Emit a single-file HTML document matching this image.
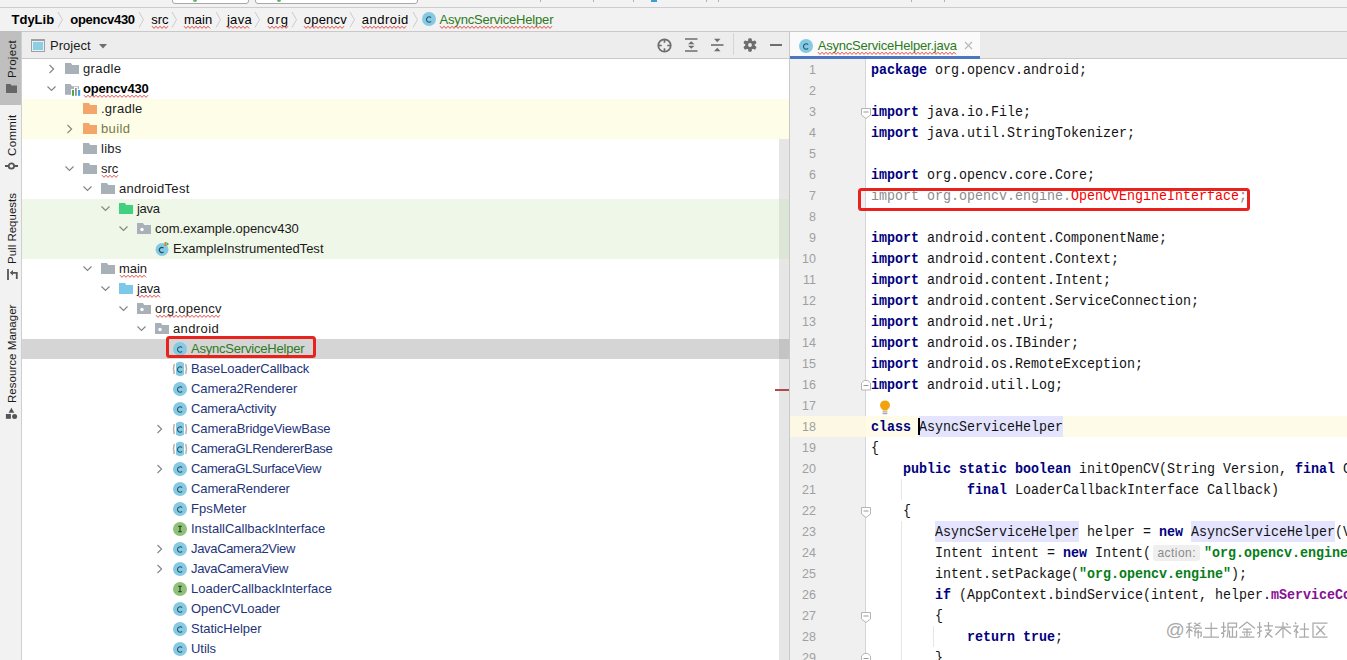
<!DOCTYPE html><html><head><meta charset="utf-8"><style>
*{margin:0;padding:0;box-sizing:border-box}
html,body{width:1347px;height:660px;overflow:hidden;background:#f2f2f2;font-family:"Liberation Sans",sans-serif;position:relative}
.a{position:absolute}
.t{position:absolute;white-space:nowrap}
.code{position:absolute;left:871px;font-family:"Liberation Mono",monospace;font-size:13.333px;line-height:21px;height:21px;white-space:pre;color:#121212;transform:scaleY(1.1);transform-origin:0 14px}
.ln{position:absolute;left:790px;width:26px;text-align:right;font-family:"Liberation Sans",sans-serif;font-size:12.5px;line-height:21px;color:#a0a0a0}
.k{color:#000080;font-weight:bold}
.s{color:#067d17;font-weight:bold}
.f{color:#871094;font-weight:bold}
.hl{background:#e4e4ff}
svg{position:absolute;overflow:visible}
</style></head><body>
<div class="a" style="left:0;top:0;width:1347px;height:8px;background:#f2f2f2;border-bottom:1px solid #cdcdcd"></div>
<div class="a" style="left:172px;top:-4px;width:77px;height:8px;border:1px solid #a9a9a9;border-radius:3px;background:#ffffff"></div>
<div class="a" style="left:255px;top:-4px;width:163px;height:8px;border:1px solid #a9a9a9;border-radius:3px;background:#ffffff"></div>
<div class="a" style="left:192.5px;top:-2.5px;width:4px;height:4px;border-radius:2px;background:#5fb55f"></div>
<div class="a" style="left:276.5px;top:-2.5px;width:4px;height:4px;border-radius:2px;background:#5fb55f"></div>
<div class="a" style="left:540px;top:0;width:1px;height:2px;background:#b0b0b0"></div>
<div class="a" style="left:593px;top:0;width:1px;height:2px;background:#b0b0b0"></div>
<div class="a" style="left:633px;top:0;width:1px;height:2px;background:#b0b0b0"></div>
<div class="a" style="left:706px;top:0;width:1px;height:2px;background:#b0b0b0"></div>
<div class="a" style="left:718px;top:0;width:1px;height:2px;background:#b0b0b0"></div>
<div class="a" style="left:911px;top:0;width:1px;height:2px;background:#b0b0b0"></div>
<div class="a" style="left:944px;top:0;width:1px;height:2px;background:#b0b0b0"></div>
<div class="a" style="left:651px;top:0;width:6px;height:1.5px;background:#3d9fd0"></div>
<div class="a" style="left:0;top:8px;width:1347px;height:24px;background:#f2f2f2;border-bottom:1px solid #c9c9c9"></div>
<div class="t" style="left:11.50px;top:10px;font-size:13px;line-height:20px;height:20px;font-weight:bold;color:#000;letter-spacing:-0.001px;">TdyLib</div>
<svg style="left:57.5px;top:12.2px" width="4.5" height="15.4"><polyline points="0,0 4.5,7.7 0,15.4" fill="none" stroke="#cccccc" stroke-width="1"/></svg>
<div class="t" style="left:70.30px;top:10px;font-size:13px;line-height:20px;height:20px;font-weight:bold;color:#000;letter-spacing:-0.300px;">opencv430</div>
<svg style="left:139px;top:12.2px" width="4.5" height="15.4"><polyline points="0,0 4.5,7.7 0,15.4" fill="none" stroke="#cccccc" stroke-width="1"/></svg>
<div class="t" style="left:151.20px;top:10px;font-size:13px;line-height:20px;height:20px;color:#000;letter-spacing:-0.015px;">src</div>
<svg style="left:151.7px;top:26px" width="16.30000000000001" height="3"><polyline points="0.0,0.2 2.0,2.4 4.0,0.2 6.0,2.4 8.0,0.2 10.0,2.4 12.0,0.2 14.0,2.4 16.0,0.2" fill="none" stroke="#e23b35" stroke-width="0.9"/></svg>
<svg style="left:172px;top:12.2px" width="4.5" height="15.4"><polyline points="0,0 4.5,7.7 0,15.4" fill="none" stroke="#cccccc" stroke-width="1"/></svg>
<div class="t" style="left:183.90px;top:10px;font-size:13px;line-height:20px;height:20px;color:#000;letter-spacing:0.074px;">main</div>
<svg style="left:184.4px;top:26px" width="27.400000000000006" height="3"><polyline points="0.0,0.2 2.0,2.4 4.0,0.2 6.0,2.4 8.0,0.2 10.0,2.4 12.0,0.2 14.0,2.4 16.0,0.2 18.0,2.4 20.0,0.2 22.0,2.4 24.0,0.2 26.0,2.4" fill="none" stroke="#e23b35" stroke-width="0.9"/></svg>
<svg style="left:215.5px;top:12.2px" width="4.5" height="15.4"><polyline points="0,0 4.5,7.7 0,15.4" fill="none" stroke="#cccccc" stroke-width="1"/></svg>
<div class="t" style="left:226.90px;top:10px;font-size:13px;line-height:20px;height:20px;color:#000;letter-spacing:0.317px;">java</div>
<svg style="left:227.4px;top:26px" width="23.799999999999983" height="3"><polyline points="0.0,0.2 2.0,2.4 4.0,0.2 6.0,2.4 8.0,0.2 10.0,2.4 12.0,0.2 14.0,2.4 16.0,0.2 18.0,2.4 20.0,0.2 22.0,2.4" fill="none" stroke="#e23b35" stroke-width="0.9"/></svg>
<svg style="left:255px;top:12.2px" width="4.5" height="15.4"><polyline points="0,0 4.5,7.7 0,15.4" fill="none" stroke="#cccccc" stroke-width="1"/></svg>
<div class="t" style="left:267.00px;top:10px;font-size:13px;line-height:20px;height:20px;color:#000;letter-spacing:1.155px;">org</div>
<svg style="left:267.5px;top:26px" width="20.100000000000023" height="3"><polyline points="0.0,0.2 2.0,2.4 4.0,0.2 6.0,2.4 8.0,0.2 10.0,2.4 12.0,0.2 14.0,2.4 16.0,0.2 18.0,2.4 20.0,0.2" fill="none" stroke="#e23b35" stroke-width="0.9"/></svg>
<svg style="left:291.5px;top:12.2px" width="4.5" height="15.4"><polyline points="0,0 4.5,7.7 0,15.4" fill="none" stroke="#cccccc" stroke-width="1"/></svg>
<div class="t" style="left:303.80px;top:10px;font-size:13px;line-height:20px;height:20px;color:#000;letter-spacing:0.196px;">opencv</div>
<svg style="left:304.3px;top:26px" width="41.89999999999998" height="3"><polyline points="0.0,0.2 2.0,2.4 4.0,0.2 6.0,2.4 8.0,0.2 10.0,2.4 12.0,0.2 14.0,2.4 16.0,0.2 18.0,2.4 20.0,0.2 22.0,2.4 24.0,0.2 26.0,2.4 28.0,0.2 30.0,2.4 32.0,0.2 34.0,2.4 36.0,0.2 38.0,2.4 40.0,0.2" fill="none" stroke="#e23b35" stroke-width="0.9"/></svg>
<svg style="left:350px;top:12.2px" width="4.5" height="15.4"><polyline points="0,0 4.5,7.7 0,15.4" fill="none" stroke="#cccccc" stroke-width="1"/></svg>
<div class="t" style="left:361.70px;top:10px;font-size:13px;line-height:20px;height:20px;color:#000;letter-spacing:0.539px;">android</div>
<svg style="left:362.2px;top:26px" width="45.60000000000002" height="3"><polyline points="0.0,0.2 2.0,2.4 4.0,0.2 6.0,2.4 8.0,0.2 10.0,2.4 12.0,0.2 14.0,2.4 16.0,0.2 18.0,2.4 20.0,0.2 22.0,2.4 24.0,0.2 26.0,2.4 28.0,0.2 30.0,2.4 32.0,0.2 34.0,2.4 36.0,0.2 38.0,2.4 40.0,0.2 42.0,2.4 44.0,0.2" fill="none" stroke="#e23b35" stroke-width="0.9"/></svg>
<svg style="left:412.5px;top:12.2px" width="4.5" height="15.4"><polyline points="0,0 4.5,7.7 0,15.4" fill="none" stroke="#cccccc" stroke-width="1"/></svg>
<svg style="left:422px;top:12px" width="14" height="14" viewBox="0 0 14 14"><circle cx="7" cy="7" r="7" fill="#86c9e3"/><path d="M9.1 5.6 A2.7 2.7 0 1 0 9.1 9.4" fill="none" stroke="#24566b" stroke-width="1.05"/></svg>
<div class="t" style="left:439.50px;top:10px;font-size:13px;line-height:20px;height:20px;color:#2c7a1a;letter-spacing:-0.179px;">AsyncServiceHelper</div>
<svg style="left:440px;top:26px" width="113" height="3"><polyline points="0.0,0.2 2.0,2.4 4.0,0.2 6.0,2.4 8.0,0.2 10.0,2.4 12.0,0.2 14.0,2.4 16.0,0.2 18.0,2.4 20.0,0.2 22.0,2.4 24.0,0.2 26.0,2.4 28.0,0.2 30.0,2.4 32.0,0.2 34.0,2.4 36.0,0.2 38.0,2.4 40.0,0.2 42.0,2.4 44.0,0.2 46.0,2.4 48.0,0.2 50.0,2.4 52.0,0.2 54.0,2.4 56.0,0.2 58.0,2.4 60.0,0.2 62.0,2.4 64.0,0.2 66.0,2.4 68.0,0.2 70.0,2.4 72.0,0.2 74.0,2.4 76.0,0.2 78.0,2.4 80.0,0.2 82.0,2.4 84.0,0.2 86.0,2.4 88.0,0.2 90.0,2.4 92.0,0.2 94.0,2.4 96.0,0.2 98.0,2.4 100.0,0.2 102.0,2.4 104.0,0.2 106.0,2.4 108.0,0.2 110.0,2.4 112.0,0.2" fill="none" stroke="#e23b35" stroke-width="0.9"/></svg>
<div class="a" style="left:0;top:32px;width:22px;height:628px;background:#f2f2f2;border-right:1px solid #cfcfcf"></div>
<div class="a" style="left:0;top:31px;width:21px;height:74px;background:#bfbfbf"></div>
<div class="a" style="left:4.7px;top:77.60px;transform-origin:0 0;transform:rotate(-90deg);font-size:11.5px;line-height:14px;white-space:nowrap;color:#1a1a1a;letter-spacing:0.318px">Project</div>
<div class="a" style="left:4.7px;top:155.50px;transform-origin:0 0;transform:rotate(-90deg);font-size:11.5px;line-height:14px;white-space:nowrap;color:#1a1a1a;letter-spacing:0.338px">Commit</div>
<div class="a" style="left:4.7px;top:263.80px;transform-origin:0 0;transform:rotate(-90deg);font-size:11.5px;line-height:14px;white-space:nowrap;color:#1a1a1a;letter-spacing:0.004px">Pull Requests</div>
<div class="a" style="left:4.7px;top:402.70px;transform-origin:0 0;transform:rotate(-90deg);font-size:11.5px;line-height:14px;white-space:nowrap;color:#1a1a1a;letter-spacing:0.040px">Resource Manager</div>
<svg style="left:6px;top:84px" width="11" height="9"><path d="M0 0 H4.5 L5.5 1.5 H11 V9 H0 Z" fill="#666"/></svg>
<svg style="left:4px;top:161px" width="14" height="10"><circle cx="7.4" cy="5" r="2.7" fill="none" stroke="#555" stroke-width="1.8"/><path d="M1 5 H4.5 M10.3 5 H14" stroke="#555" stroke-width="1.8"/></svg>
<svg style="left:6px;top:268px" width="12" height="13"><path d="M2 1 V12" stroke="#555" stroke-width="1.8"/><path d="M5 4.8 H10.8 V11" fill="none" stroke="#555" stroke-width="1.8"/><path d="M3.8 4.8 L7 2 V7.6 Z" fill="#555"/></svg>
<svg style="left:5px;top:407px" width="12" height="12"><path d="M6.4 0.8 L9.3 5.8 H3.6 Z" fill="#555"/><rect x="0.9" y="7" width="5" height="4.8" fill="#555"/><circle cx="9.6" cy="9.4" r="2.5" fill="#555"/></svg>
<div class="a" style="left:22px;top:32px;width:767px;height:27px;background:#ededed;border-bottom:1px solid #c9c9c9"></div>
<svg style="left:31px;top:39px" width="14" height="13"><rect x="0.5" y="0.5" width="13" height="12" fill="#e2f2f7" stroke="#a0a0a0"/><rect x="0" y="0" width="14" height="2" fill="#a0a0a0"/><rect x="2" y="3" width="10" height="8" fill="#8fcde3"/></svg>
<div class="t" style="left:50.00px;top:36px;font-size:13px;line-height:20px;height:20px;color:#1a1a1a;letter-spacing:0.007px;">Project</div>
<svg style="left:99px;top:44px" width="8" height="5"><path d="M0 0 H8 L4 4.5 Z" fill="#6e6e6e"/></svg>
<svg style="left:657px;top:38px" width="15" height="15"><circle cx="7.5" cy="7.5" r="6.2" fill="none" stroke="#6e6e6e" stroke-width="1.8"/><path d="M7.5 1.5 V4.8 M7.5 10.2 V13.5 M1.5 7.5 H4.8 M10.2 7.5 H13.5" stroke="#6e6e6e" stroke-width="1.7"/></svg>
<svg style="left:685px;top:38px" width="13" height="14"><path d="M0 1 H12.5 M0 13 H12.5" stroke="#6e6e6e" stroke-width="1.6"/><path d="M3 6.3 L6.25 3.3 L9.5 6.3 Z M3 7.8 L6.25 10.8 L9.5 7.8 Z" fill="#6e6e6e"/></svg>
<svg style="left:711px;top:38px" width="13" height="14"><path d="M0 7 H12.5" stroke="#6e6e6e" stroke-width="1.6"/><path d="M3 0.8 L6.25 4.3 L9.5 0.8 Z M3 13.2 L6.25 9.7 L9.5 13.2 Z" fill="#6e6e6e"/></svg>
<div class="a" style="left:733px;top:33px;width:1px;height:22px;background:#d6d6d6"></div>
<svg style="left:743px;top:38px" width="14" height="14" viewBox="0 0 14 14"><g fill="#6e6e6e"><circle cx="7" cy="7" r="4.7"/><rect x="5.2" y="0.2" width="3.6" height="4" rx="1.2" transform="rotate(0 7 7)"/><rect x="5.2" y="0.2" width="3.6" height="4" rx="1.2" transform="rotate(60 7 7)"/><rect x="5.2" y="0.2" width="3.6" height="4" rx="1.2" transform="rotate(120 7 7)"/><rect x="5.2" y="0.2" width="3.6" height="4" rx="1.2" transform="rotate(180 7 7)"/><rect x="5.2" y="0.2" width="3.6" height="4" rx="1.2" transform="rotate(240 7 7)"/><rect x="5.2" y="0.2" width="3.6" height="4" rx="1.2" transform="rotate(300 7 7)"/></g><circle cx="7" cy="7" r="1.9" fill="#ededed"/></svg>
<div class="a" style="left:770px;top:44px;width:12px;height:2px;background:#6e6e6e"></div>
<div class="a" style="left:22px;top:59px;width:767px;height:601px;background:#ffffff"></div>
<div class="a" style="left:22px;top:99px;width:767px;height:40px;background:#fdfde8"></div>
<div class="a" style="left:22px;top:199px;width:757px;height:60px;background:#eff7e8"></div>
<div class="a" style="left:22px;top:339px;width:757px;height:20px;background:#d5d5d5"></div>
<div class="a" style="left:779px;top:139px;width:10px;height:521px;background:#e6e6e6"></div>
<div class="a" style="left:779px;top:199px;width:10px;height:60px;background:#dde5d6"></div>
<div class="a" style="left:779px;top:339px;width:10px;height:20px;background:#c4c4c4"></div>
<div class="a" style="left:775px;top:389px;width:14px;height:1.5px;background:#b04850"></div>
<svg style="left:49px;top:64.5px" width="6" height="9"><polyline points="0.5,0 4.6,4 0.5,8" fill="none" stroke="#858585" stroke-width="1.15"/></svg>
<svg style="left:65px;top:63px" width="14" height="11" viewBox="0 0 14 11"><path d="M0 0 H6 L7.2 2 H14 V11 H0 Z" fill="#a8b1b8"/></svg>
<div class="t" style="left:83.00px;top:59px;font-size:13px;line-height:20px;height:20px;color:#1a1a1a;letter-spacing:0.393px;">gradle</div>
<svg style="left:47px;top:86px" width="9" height="6"><polyline points="0.5,0.5 4.5,4.5 8.5,0.5" fill="none" stroke="#858585" stroke-width="1.15"/></svg>
<svg style="left:65px;top:84px" width="16" height="12" viewBox="0 0 16 12"><path d="M0 0 H5.5 L7 2.2 H14 V10.7 H0 Z" fill="#a8b1b8"/><rect x="6" y="5" width="10" height="7" fill="#fff"/><rect x="9" y="2.9" width="3.8" height="9" fill="#fff"/><rect x="7" y="6" width="2" height="5.8" fill="#4fa843"/><rect x="10" y="3.9" width="1.8" height="7.9" fill="#8d9499"/><rect x="13" y="6" width="2.2" height="5.8" fill="#3d9ee0"/></svg>
<div class="t" style="left:83.00px;top:79px;font-size:13px;line-height:20px;height:20px;font-weight:bold;color:#000;letter-spacing:-0.188px;">opencv430</div>
<svg style="left:83.5px;top:94.9px" width="64.69999999999999" height="3"><polyline points="0.0,0.2 2.0,2.4 4.0,0.2 6.0,2.4 8.0,0.2 10.0,2.4 12.0,0.2 14.0,2.4 16.0,0.2 18.0,2.4 20.0,0.2 22.0,2.4 24.0,0.2 26.0,2.4 28.0,0.2 30.0,2.4 32.0,0.2 34.0,2.4 36.0,0.2 38.0,2.4 40.0,0.2 42.0,2.4 44.0,0.2 46.0,2.4 48.0,0.2 50.0,2.4 52.0,0.2 54.0,2.4 56.0,0.2 58.0,2.4 60.0,0.2 62.0,2.4 64.0,0.2" fill="none" stroke="#e23b35" stroke-width="0.9"/></svg>
<svg style="left:83px;top:103px" width="14" height="11" viewBox="0 0 14 11"><path d="M0 0 H6 L7.2 2 H14 V11 H0 Z" fill="#f4a56a"/></svg>
<div class="t" style="left:101.00px;top:99px;font-size:13px;line-height:20px;height:20px;color:#1a1a1a;letter-spacing:0.258px;">.gradle</div>
<svg style="left:67px;top:124.5px" width="6" height="9"><polyline points="0.5,0 4.6,4 0.5,8" fill="none" stroke="#858585" stroke-width="1.15"/></svg>
<svg style="left:83px;top:123px" width="14" height="11" viewBox="0 0 14 11"><path d="M0 0 H6 L7.2 2 H14 V11 H0 Z" fill="#f4a56a"/></svg>
<div class="t" style="left:101.00px;top:119px;font-size:13px;line-height:20px;height:20px;color:#77774a;letter-spacing:0.383px;">build</div>
<svg style="left:83px;top:143px" width="14" height="11" viewBox="0 0 14 11"><path d="M0 0 H6 L7.2 2 H14 V11 H0 Z" fill="#a8b1b8"/></svg>
<div class="t" style="left:101.00px;top:139px;font-size:13px;line-height:20px;height:20px;color:#1a1a1a;letter-spacing:0.265px;">libs</div>
<svg style="left:65px;top:166px" width="9" height="6"><polyline points="0.5,0.5 4.5,4.5 8.5,0.5" fill="none" stroke="#858585" stroke-width="1.15"/></svg>
<svg style="left:83px;top:163px" width="14" height="11" viewBox="0 0 14 11"><path d="M0 0 H6 L7.2 2 H14 V11 H0 Z" fill="#a8b1b8"/></svg>
<div class="t" style="left:101.00px;top:159px;font-size:13px;line-height:20px;height:20px;color:#1a1a1a;letter-spacing:-0.065px;">src</div>
<svg style="left:101.5px;top:174.9px" width="16.200000000000003" height="3"><polyline points="0.0,0.2 2.0,2.4 4.0,0.2 6.0,2.4 8.0,0.2 10.0,2.4 12.0,0.2 14.0,2.4 16.0,0.2" fill="none" stroke="#e23b35" stroke-width="0.9"/></svg>
<svg style="left:83px;top:186px" width="9" height="6"><polyline points="0.5,0.5 4.5,4.5 8.5,0.5" fill="none" stroke="#858585" stroke-width="1.15"/></svg>
<svg style="left:101px;top:183px" width="14" height="11" viewBox="0 0 14 11"><path d="M0 0 H6 L7.2 2 H14 V11 H0 Z" fill="#a8b1b8"/></svg>
<div class="t" style="left:119.00px;top:179px;font-size:13px;line-height:20px;height:20px;color:#1a1a1a;letter-spacing:0.309px;">androidTest</div>
<svg style="left:101px;top:206px" width="9" height="6"><polyline points="0.5,0.5 4.5,4.5 8.5,0.5" fill="none" stroke="#858585" stroke-width="1.15"/></svg>
<svg style="left:119px;top:203px" width="14" height="11" viewBox="0 0 14 11"><path d="M0 0 H6 L7.2 2 H14 V11 H0 Z" fill="#3fd17e"/></svg>
<div class="t" style="left:137.00px;top:199px;font-size:13px;line-height:20px;height:20px;color:#1a1a1a;letter-spacing:-0.316px;">java</div>
<svg style="left:119px;top:226px" width="9" height="6"><polyline points="0.5,0.5 4.5,4.5 8.5,0.5" fill="none" stroke="#858585" stroke-width="1.15"/></svg>
<svg style="left:137px;top:223px" width="14" height="11" viewBox="0 0 14 11"><path d="M0 0 H6 L7.2 2 H14 V11 H0 Z" fill="#a8b1b8"/><circle cx="5" cy="6.5" r="1.7" fill="#ffffff"/></svg>
<div class="t" style="left:155.00px;top:219px;font-size:13px;line-height:20px;height:20px;color:#1a1a1a;letter-spacing:-0.036px;">com.example.opencv430</div>
<svg style="left:155px;top:241.5px" width="14" height="14" viewBox="0 0 14 14"><circle cx="7" cy="7.5" r="6.5" fill="#86c9e3"/><path d="M8.6 6.2 A2.5 2.5 0 1 0 8.6 9.8" fill="none" stroke="#1d4f63" stroke-width="1.1"/><rect x="9.5" y="0" width="1.6" height="4" fill="#d9822b"/><path d="M11.5 0 L14 2 L11.5 4 Z" fill="#4fa64f"/></svg>
<div class="t" style="left:173.00px;top:239px;font-size:13px;line-height:20px;height:20px;color:#1a1a1a;letter-spacing:0.009px;">ExampleInstrumentedTest</div>
<svg style="left:83px;top:266px" width="9" height="6"><polyline points="0.5,0.5 4.5,4.5 8.5,0.5" fill="none" stroke="#858585" stroke-width="1.15"/></svg>
<svg style="left:101px;top:263px" width="14" height="11" viewBox="0 0 14 11"><path d="M0 0 H6 L7.2 2 H14 V11 H0 Z" fill="#a8b1b8"/></svg>
<div class="t" style="left:119.00px;top:259px;font-size:13px;line-height:20px;height:20px;color:#1a1a1a;letter-spacing:-0.092px;">main</div>
<svg style="left:119.5px;top:274.9px" width="26.900000000000006" height="3"><polyline points="0.0,0.2 2.0,2.4 4.0,0.2 6.0,2.4 8.0,0.2 10.0,2.4 12.0,0.2 14.0,2.4 16.0,0.2 18.0,2.4 20.0,0.2 22.0,2.4 24.0,0.2 26.0,2.4" fill="none" stroke="#e23b35" stroke-width="0.9"/></svg>
<svg style="left:101px;top:286px" width="9" height="6"><polyline points="0.5,0.5 4.5,4.5 8.5,0.5" fill="none" stroke="#858585" stroke-width="1.15"/></svg>
<svg style="left:119px;top:283px" width="14" height="11" viewBox="0 0 14 11"><path d="M0 0 H6 L7.2 2 H14 V11 H0 Z" fill="#7cc7ea"/></svg>
<div class="t" style="left:137.00px;top:279px;font-size:13px;line-height:20px;height:20px;color:#1a1a1a;letter-spacing:-0.216px;">java</div>
<svg style="left:137.5px;top:294.9px" width="22.19999999999999" height="3"><polyline points="0.0,0.2 2.0,2.4 4.0,0.2 6.0,2.4 8.0,0.2 10.0,2.4 12.0,0.2 14.0,2.4 16.0,0.2 18.0,2.4 20.0,0.2 22.0,2.4" fill="none" stroke="#e23b35" stroke-width="0.9"/></svg>
<svg style="left:119px;top:306px" width="9" height="6"><polyline points="0.5,0.5 4.5,4.5 8.5,0.5" fill="none" stroke="#858585" stroke-width="1.15"/></svg>
<svg style="left:137px;top:303px" width="14" height="11" viewBox="0 0 14 11"><path d="M0 0 H6 L7.2 2 H14 V11 H0 Z" fill="#a8b1b8"/><circle cx="5" cy="6.5" r="1.7" fill="#ffffff"/></svg>
<div class="t" style="left:155.00px;top:299px;font-size:13px;line-height:20px;height:20px;color:#1a1a1a;letter-spacing:0.231px;">org.opencv</div>
<svg style="left:155.5px;top:314.9px" width="65.4" height="3"><polyline points="0.0,0.2 2.0,2.4 4.0,0.2 6.0,2.4 8.0,0.2 10.0,2.4 12.0,0.2 14.0,2.4 16.0,0.2 18.0,2.4 20.0,0.2 22.0,2.4 24.0,0.2 26.0,2.4 28.0,0.2 30.0,2.4 32.0,0.2 34.0,2.4 36.0,0.2 38.0,2.4 40.0,0.2 42.0,2.4 44.0,0.2 46.0,2.4 48.0,0.2 50.0,2.4 52.0,0.2 54.0,2.4 56.0,0.2 58.0,2.4 60.0,0.2 62.0,2.4 64.0,0.2" fill="none" stroke="#e23b35" stroke-width="0.9"/></svg>
<svg style="left:137px;top:326px" width="9" height="6"><polyline points="0.5,0.5 4.5,4.5 8.5,0.5" fill="none" stroke="#858585" stroke-width="1.15"/></svg>
<svg style="left:155px;top:323px" width="14" height="11" viewBox="0 0 14 11"><path d="M0 0 H6 L7.2 2 H14 V11 H0 Z" fill="#a8b1b8"/><circle cx="5" cy="6.5" r="1.7" fill="#ffffff"/></svg>
<div class="t" style="left:173.00px;top:319px;font-size:13px;line-height:20px;height:20px;color:#1a1a1a;letter-spacing:0.389px;">android</div>
<svg style="left:173px;top:341.5px" width="14" height="14" viewBox="0 0 14 14"><circle cx="7" cy="7" r="7" fill="#86c9e3"/><path d="M9.1 5.6 A2.7 2.7 0 1 0 9.1 9.4" fill="none" stroke="#24566b" stroke-width="1.05"/></svg>
<div class="t" style="left:191.00px;top:339px;font-size:13px;line-height:20px;height:20px;color:#2d7a21;letter-spacing:-0.208px;">AsyncServiceHelper</div>
<svg style="left:173px;top:361.5px" width="14" height="14" viewBox="0 0 14 14"><path d="M3 1.26 A7 7 0 0 1 11 1.26 L11 12.74 A7 7 0 0 1 3 12.74 Z" fill="#86c9e3"/><path d="M1.3 2 Q-0.3 7 1.3 12" fill="none" stroke="#b0b0b0" stroke-width="1.5"/><path d="M12.7 2 Q14.3 7 12.7 12" fill="none" stroke="#b0b0b0" stroke-width="1.5"/><path d="M9.1 5.6 A2.7 2.7 0 1 0 9.1 9.4" fill="none" stroke="#24566b" stroke-width="1.05"/></svg>
<div class="t" style="left:191.00px;top:359px;font-size:13px;line-height:20px;height:20px;color:#1e3479;letter-spacing:-0.098px;">BaseLoaderCallback</div>
<svg style="left:173px;top:381.5px" width="14" height="14" viewBox="0 0 14 14"><circle cx="7" cy="7" r="7" fill="#86c9e3"/><path d="M9.1 5.6 A2.7 2.7 0 1 0 9.1 9.4" fill="none" stroke="#24566b" stroke-width="1.05"/></svg>
<div class="t" style="left:191.00px;top:379px;font-size:13px;line-height:20px;height:20px;color:#1e3479;letter-spacing:-0.104px;">Camera2Renderer</div>
<svg style="left:173px;top:401.5px" width="14" height="14" viewBox="0 0 14 14"><circle cx="7" cy="7" r="7" fill="#86c9e3"/><path d="M9.1 5.6 A2.7 2.7 0 1 0 9.1 9.4" fill="none" stroke="#24566b" stroke-width="1.05"/></svg>
<div class="t" style="left:191.00px;top:399px;font-size:13px;line-height:20px;height:20px;color:#1e3479;letter-spacing:-0.162px;">CameraActivity</div>
<svg style="left:157px;top:424.5px" width="6" height="9"><polyline points="0.5,0 4.6,4 0.5,8" fill="none" stroke="#858585" stroke-width="1.15"/></svg>
<svg style="left:173px;top:421.5px" width="14" height="14" viewBox="0 0 14 14"><path d="M3 1.26 A7 7 0 0 1 11 1.26 L11 12.74 A7 7 0 0 1 3 12.74 Z" fill="#86c9e3"/><path d="M1.3 2 Q-0.3 7 1.3 12" fill="none" stroke="#b0b0b0" stroke-width="1.5"/><path d="M12.7 2 Q14.3 7 12.7 12" fill="none" stroke="#b0b0b0" stroke-width="1.5"/><path d="M9.1 5.6 A2.7 2.7 0 1 0 9.1 9.4" fill="none" stroke="#24566b" stroke-width="1.05"/></svg>
<div class="t" style="left:191.00px;top:419px;font-size:13px;line-height:20px;height:20px;color:#1e3479;letter-spacing:-0.099px;">CameraBridgeViewBase</div>
<svg style="left:173px;top:441.5px" width="14" height="14" viewBox="0 0 14 14"><path d="M3 1.26 A7 7 0 0 1 11 1.26 L11 12.74 A7 7 0 0 1 3 12.74 Z" fill="#86c9e3"/><path d="M1.3 2 Q-0.3 7 1.3 12" fill="none" stroke="#b0b0b0" stroke-width="1.5"/><path d="M12.7 2 Q14.3 7 12.7 12" fill="none" stroke="#b0b0b0" stroke-width="1.5"/><path d="M9.1 5.6 A2.7 2.7 0 1 0 9.1 9.4" fill="none" stroke="#24566b" stroke-width="1.05"/></svg>
<div class="t" style="left:191.00px;top:439px;font-size:13px;line-height:20px;height:20px;color:#1e3479;letter-spacing:-0.295px;">CameraGLRendererBase</div>
<svg style="left:157px;top:464.5px" width="6" height="9"><polyline points="0.5,0 4.6,4 0.5,8" fill="none" stroke="#858585" stroke-width="1.15"/></svg>
<svg style="left:173px;top:461.5px" width="14" height="14" viewBox="0 0 14 14"><circle cx="7" cy="7" r="7" fill="#86c9e3"/><path d="M9.1 5.6 A2.7 2.7 0 1 0 9.1 9.4" fill="none" stroke="#24566b" stroke-width="1.05"/></svg>
<div class="t" style="left:191.00px;top:459px;font-size:13px;line-height:20px;height:20px;color:#1e3479;letter-spacing:-0.329px;">CameraGLSurfaceView</div>
<svg style="left:173px;top:481.5px" width="14" height="14" viewBox="0 0 14 14"><circle cx="7" cy="7" r="7" fill="#86c9e3"/><path d="M9.1 5.6 A2.7 2.7 0 1 0 9.1 9.4" fill="none" stroke="#24566b" stroke-width="1.05"/></svg>
<div class="t" style="left:191.00px;top:479px;font-size:13px;line-height:20px;height:20px;color:#1e3479;letter-spacing:-0.118px;">CameraRenderer</div>
<svg style="left:173px;top:501.5px" width="14" height="14" viewBox="0 0 14 14"><circle cx="7" cy="7" r="7" fill="#86c9e3"/><path d="M9.1 5.6 A2.7 2.7 0 1 0 9.1 9.4" fill="none" stroke="#24566b" stroke-width="1.05"/></svg>
<div class="t" style="left:191.00px;top:499px;font-size:13px;line-height:20px;height:20px;color:#1e3479;letter-spacing:0.071px;">FpsMeter</div>
<svg style="left:173px;top:521.5px" width="14" height="14" viewBox="0 0 14 14"><circle cx="7" cy="7" r="7" fill="#8fc17a"/><path d="M5.3 4.3 H8.7 M7 4.3 V9.7 M5.3 9.7 H8.7" fill="none" stroke="#2b4a1f" stroke-width="1.2"/></svg>
<div class="t" style="left:191.00px;top:519px;font-size:13px;line-height:20px;height:20px;color:#1e3479;letter-spacing:-0.009px;">InstallCallbackInterface</div>
<svg style="left:157px;top:544.5px" width="6" height="9"><polyline points="0.5,0 4.6,4 0.5,8" fill="none" stroke="#858585" stroke-width="1.15"/></svg>
<svg style="left:173px;top:541.5px" width="14" height="14" viewBox="0 0 14 14"><circle cx="7" cy="7" r="7" fill="#86c9e3"/><path d="M9.1 5.6 A2.7 2.7 0 1 0 9.1 9.4" fill="none" stroke="#24566b" stroke-width="1.05"/></svg>
<div class="t" style="left:191.00px;top:539px;font-size:13px;line-height:20px;height:20px;color:#1e3479;letter-spacing:-0.326px;">JavaCamera2View</div>
<svg style="left:157px;top:564.5px" width="6" height="9"><polyline points="0.5,0 4.6,4 0.5,8" fill="none" stroke="#858585" stroke-width="1.15"/></svg>
<svg style="left:173px;top:561.5px" width="14" height="14" viewBox="0 0 14 14"><circle cx="7" cy="7" r="7" fill="#86c9e3"/><path d="M9.1 5.6 A2.7 2.7 0 1 0 9.1 9.4" fill="none" stroke="#24566b" stroke-width="1.05"/></svg>
<div class="t" style="left:191.00px;top:559px;font-size:13px;line-height:20px;height:20px;color:#1e3479;letter-spacing:-0.326px;">JavaCameraView</div>
<svg style="left:173px;top:581.5px" width="14" height="14" viewBox="0 0 14 14"><circle cx="7" cy="7" r="7" fill="#8fc17a"/><path d="M5.3 4.3 H8.7 M7 4.3 V9.7 M5.3 9.7 H8.7" fill="none" stroke="#2b4a1f" stroke-width="1.2"/></svg>
<div class="t" style="left:191.00px;top:579px;font-size:13px;line-height:20px;height:20px;color:#1e3479;letter-spacing:0.004px;">LoaderCallbackInterface</div>
<svg style="left:173px;top:601.5px" width="14" height="14" viewBox="0 0 14 14"><circle cx="7" cy="7" r="7" fill="#86c9e3"/><path d="M9.1 5.6 A2.7 2.7 0 1 0 9.1 9.4" fill="none" stroke="#24566b" stroke-width="1.05"/></svg>
<div class="t" style="left:191.00px;top:599px;font-size:13px;line-height:20px;height:20px;color:#1e3479;letter-spacing:-0.104px;">OpenCVLoader</div>
<svg style="left:173px;top:621.5px" width="14" height="14" viewBox="0 0 14 14"><circle cx="7" cy="7" r="7" fill="#86c9e3"/><path d="M9.1 5.6 A2.7 2.7 0 1 0 9.1 9.4" fill="none" stroke="#24566b" stroke-width="1.05"/></svg>
<div class="t" style="left:191.00px;top:619px;font-size:13px;line-height:20px;height:20px;color:#1e3479;letter-spacing:-0.028px;">StaticHelper</div>
<svg style="left:173px;top:641.5px" width="14" height="14" viewBox="0 0 14 14"><circle cx="7" cy="7" r="7" fill="#86c9e3"/><path d="M9.1 5.6 A2.7 2.7 0 1 0 9.1 9.4" fill="none" stroke="#24566b" stroke-width="1.05"/></svg>
<div class="t" style="left:191.00px;top:639px;font-size:13px;line-height:20px;height:20px;color:#1e3479;letter-spacing:-0.044px;">Utils</div>
<div class="a" style="left:166px;top:336px;width:149.5px;height:22px;border:3px solid #e8231d;border-radius:3.5px"></div>
<div class="a" style="left:789px;top:32px;width:1px;height:628px;background:#c9c9c9"></div>
<div class="a" style="left:790px;top:32px;width:557px;height:27px;background:#ebebeb;border-bottom:1px solid #c9c9c9"></div>
<div class="a" style="left:790px;top:32px;width:190px;height:27px;background:#fafafa"></div>
<div class="a" style="left:790px;top:56px;width:190px;height:3px;background:#4a77c0"></div>
<svg style="left:799px;top:39px" width="14" height="14" viewBox="0 0 14 14"><circle cx="7" cy="7" r="7" fill="#86c9e3"/><path d="M9.1 5.6 A2.7 2.7 0 1 0 9.1 9.4" fill="none" stroke="#24566b" stroke-width="1.05"/></svg>
<div class="t" style="left:817.70px;top:36px;font-size:13px;line-height:20px;height:20px;color:#2c7a1a;letter-spacing:-0.199px;">AsyncServiceHelper.java</div>
<svg style="left:818px;top:51.5px" width="138" height="3"><polyline points="0.0,0.2 2.0,2.4 4.0,0.2 6.0,2.4 8.0,0.2 10.0,2.4 12.0,0.2 14.0,2.4 16.0,0.2 18.0,2.4 20.0,0.2 22.0,2.4 24.0,0.2 26.0,2.4 28.0,0.2 30.0,2.4 32.0,0.2 34.0,2.4 36.0,0.2 38.0,2.4 40.0,0.2 42.0,2.4 44.0,0.2 46.0,2.4 48.0,0.2 50.0,2.4 52.0,0.2 54.0,2.4 56.0,0.2 58.0,2.4 60.0,0.2 62.0,2.4 64.0,0.2 66.0,2.4 68.0,0.2 70.0,2.4 72.0,0.2 74.0,2.4 76.0,0.2 78.0,2.4 80.0,0.2 82.0,2.4 84.0,0.2 86.0,2.4 88.0,0.2 90.0,2.4 92.0,0.2 94.0,2.4 96.0,0.2 98.0,2.4 100.0,0.2 102.0,2.4 104.0,0.2 106.0,2.4 108.0,0.2 110.0,2.4 112.0,0.2 114.0,2.4 116.0,0.2 118.0,2.4 120.0,0.2 122.0,2.4 124.0,0.2 126.0,2.4 128.0,0.2 130.0,2.4 132.0,0.2 134.0,2.4 136.0,0.2 138.0,2.4" fill="none" stroke="#e23b35" stroke-width="0.9"/></svg>
<svg style="left:965px;top:42px" width="7" height="7"><path d="M0 0 L7 7 M7 0 L0 7" stroke="#b8b8b8" stroke-width="1.1"/></svg>
<div class="a" style="left:790px;top:59px;width:76px;height:601px;background:#f0f0f0;border-right:1px solid #d5d5d5"></div>
<div class="a" style="left:866px;top:59px;width:481px;height:601px;background:#ffffff"></div>
<div class="a" style="left:790px;top:416px;width:76px;height:21px;background:#fcf8e3"></div>
<div class="a" style="left:866px;top:416px;width:481px;height:21px;background:#fefbe9"></div>
<div class="a" style="left:919px;top:416px;width:144px;height:21px;background:#e4e4ff"></div>
<div class="a" style="left:935px;top:521px;width:144px;height:21px;background:#e4e4ff"></div>
<div class="a" style="left:1191px;top:521px;width:144px;height:21px;background:#e4e4ff"></div>
<div class="ln" style="top:60px">1</div>
<div class="code" style="top:59.5px"><span class="k">package</span> org.opencv.android;</div>
<div class="ln" style="top:81px">2</div>
<div class="ln" style="top:102px">3</div>
<div class="code" style="top:101.5px"><span class="k">import</span> java.io.File;</div>
<div class="ln" style="top:123px">4</div>
<div class="code" style="top:122.5px"><span class="k">import</span> java.util.StringTokenizer;</div>
<div class="ln" style="top:144px">5</div>
<div class="ln" style="top:165px">6</div>
<div class="code" style="top:164.5px"><span class="k">import</span> org.opencv.core.Core;</div>
<div class="ln" style="top:186px">7</div>
<div class="code" style="top:185.5px"><span style="color:#8c8c8c">import org.opencv.engine.</span><span style="color:#f50000">OpenCVEngineInterface</span><span style="color:#8c8c8c">;</span></div>
<div class="ln" style="top:207px">8</div>
<div class="ln" style="top:228px">9</div>
<div class="code" style="top:227.5px"><span class="k">import</span> android.content.ComponentName;</div>
<div class="ln" style="top:249px">10</div>
<div class="code" style="top:248.5px"><span class="k">import</span> android.content.Context;</div>
<div class="ln" style="top:270px">11</div>
<div class="code" style="top:269.5px"><span class="k">import</span> android.content.Intent;</div>
<div class="ln" style="top:291px">12</div>
<div class="code" style="top:290.5px"><span class="k">import</span> android.content.ServiceConnection;</div>
<div class="ln" style="top:312px">13</div>
<div class="code" style="top:311.5px"><span class="k">import</span> android.net.Uri;</div>
<div class="ln" style="top:333px">14</div>
<div class="code" style="top:332.5px"><span class="k">import</span> android.os.IBinder;</div>
<div class="ln" style="top:354px">15</div>
<div class="code" style="top:353.5px"><span class="k">import</span> android.os.RemoteException;</div>
<div class="ln" style="top:375px">16</div>
<div class="code" style="top:374.5px"><span class="k">import</span> android.util.Log;</div>
<div class="ln" style="top:396px">17</div>
<div class="ln" style="top:417px">18</div>
<div class="code" style="top:416.5px"><span class="k">class</span> AsyncServiceHelper</div>
<div class="ln" style="top:438px">19</div>
<div class="code" style="top:437.5px">{</div>
<div class="ln" style="top:459px">20</div>
<div class="code" style="top:458.5px">    <span class="k">public static boolean</span> initOpenCV(String Version, <span class="k">final</span> Context AppContext,</div>
<div class="ln" style="top:480px">21</div>
<div class="code" style="top:479.5px">            <span class="k">final</span> LoaderCallbackInterface Callback)</div>
<div class="ln" style="top:501px">22</div>
<div class="code" style="top:500.5px">    {</div>
<div class="ln" style="top:522px">23</div>
<div class="code" style="top:521.5px">        AsyncServiceHelper helper = <span class="k">new</span> AsyncServiceHelper(Version, AppContext, Callback);</div>
<div class="ln" style="top:543px">24</div>
<div class="code" style="top:542.5px">        Intent intent = <span class="k">new</span> Intent(<span style="display:inline-block;width:53px"></span><span class="s">&quot;org.opencv.engine.BIND&quot;</span>);</div>
<div class="ln" style="top:564px">25</div>
<div class="code" style="top:563.5px">        intent.setPackage(<span class="s">&quot;org.opencv.engine&quot;</span>);</div>
<div class="ln" style="top:585px">26</div>
<div class="code" style="top:584.5px">        <span class="k">if</span> (AppContext.bindService(intent, helper.<span class="f">mServiceConnection</span>, Context.BIND_AUTO_CREATE))</div>
<div class="ln" style="top:606px">27</div>
<div class="code" style="top:605.5px">        {</div>
<div class="ln" style="top:627px">28</div>
<div class="code" style="top:626.5px">            <span class="k">return true</span>;</div>
<div class="ln" style="top:648px">29</div>
<div class="code" style="top:647.5px">        }</div>
<div class="a" style="left:1153px;top:545px;width:47px;height:16px;background:#efefef;border-radius:3px"></div>
<div class="t" style="left:1157.50px;top:543px;font-size:12px;line-height:20px;height:20px;color:#8a8a8a;letter-spacing:0.441px;">action:</div>
<div class="a" style="left:918px;top:418px;width:2px;height:17px;background:#000"></div>
<svg style="left:879px;top:400px" width="12" height="15"><circle cx="6" cy="5.3" r="4.9" fill="#f2a20c"/><rect x="3.6" y="7.5" width="4.8" height="3" fill="#f2a20c"/><path d="M3.6 11.9 H8.4 M3.6 13.7 H8.4" stroke="#8a8a8a" stroke-width="0.9"/></svg>
<div class="a" style="left:858px;top:187.5px;width:391.5px;height:23px;border:3px solid #e8231d;border-radius:3.5px"></div>
<svg style="left:861px;top:107.5px" width="10" height="11"><path d="M0.5 0.5 H9.5 V7 L5 10.5 L0.5 7 Z" fill="#fff" stroke="#b5b5b5"/><path d="M2.5 4 H7.5" stroke="#999" stroke-width="1"/></svg>
<svg style="left:861px;top:506.5px" width="10" height="11"><path d="M0.5 0.5 H9.5 V7 L5 10.5 L0.5 7 Z" fill="#fff" stroke="#b5b5b5"/><path d="M2.5 4 H7.5" stroke="#999" stroke-width="1"/></svg>
<svg style="left:861px;top:611.5px" width="10" height="11"><path d="M0.5 0.5 H9.5 V7 L5 10.5 L0.5 7 Z" fill="#fff" stroke="#b5b5b5"/><path d="M2.5 4 H7.5" stroke="#999" stroke-width="1"/></svg>
<svg style="left:861px;top:379.5px" width="10" height="11"><path d="M0.5 10 V3 L3.2 0.5 H6.8 L9.5 3 V10 Z" fill="#fff" stroke="#b5b5b5"/><path d="M2.5 5.5 H7.5" stroke="#999" stroke-width="1"/></svg>
<svg style="left:861px;top:652.5px" width="10" height="11"><path d="M0.5 10 V3 L3.2 0.5 H6.8 L9.5 3 V10 Z" fill="#fff" stroke="#b5b5b5"/><path d="M2.5 5.5 H7.5" stroke="#999" stroke-width="1"/></svg>
<div class="a" style="left:901px;top:479px;width:1px;height:21px;background:#e6e6e6"></div>
<div class="a" style="left:901px;top:521px;width:1px;height:139px;background:#e6e6e6"></div>
<div class="a" style="left:933px;top:626px;width:1px;height:21px;background:#e6e6e6"></div>
<div class="a" style="left:1165.5px;top:619px;font-size:19px;line-height:22px;color:#a9a9a9;white-space:nowrap;text-shadow:0 0 1px #fff">@</div>
<svg style="left:1186px;top:622px" width="16" height="16" viewBox="0 0 16 16"><path d="M1.5 2 L5.5 0.8 M0 5 H6.5 M3.2 1 V16 M3.2 6.5 L0.2 11.5 M3.5 7 L6.5 9.5 M8 0.8 L14.5 4.5 M14.5 0.8 L8 4.5 M7 6 H16 M10.5 6 L8.5 10 M9 10 V14.5 M9 10 H15.2 V14 L14 14.5 M12.2 8 V16.5" fill="none" stroke="#ffffff" stroke-width="2.6" stroke-linecap="square" opacity="0.8"/><path d="M1.5 2 L5.5 0.8 M0 5 H6.5 M3.2 1 V16 M3.2 6.5 L0.2 11.5 M3.5 7 L6.5 9.5 M8 0.8 L14.5 4.5 M14.5 0.8 L8 4.5 M7 6 H16 M10.5 6 L8.5 10 M9 10 V14.5 M9 10 H15.2 V14 L14 14.5 M12.2 8 V16.5" fill="none" stroke="#a9a9a9" stroke-width="1.25"/></svg>
<svg style="left:1203px;top:622px" width="16" height="16" viewBox="0 0 16 16"><path d="M2 6.4 H14.5 M8.2 0.5 V15 M0 15.2 H16" fill="none" stroke="#ffffff" stroke-width="2.6" stroke-linecap="square" opacity="0.8"/><path d="M2 6.4 H14.5 M8.2 0.5 V15 M0 15.2 H16" fill="none" stroke="#a9a9a9" stroke-width="1.25"/></svg>
<svg style="left:1221px;top:622px" width="16" height="16" viewBox="0 0 16 16"><path d="M0 5 H5 M2.6 0 V14.5 L1.2 15.5 M0 11.5 L5 8.5 M7 1 H15.5 V5 H7 M7 1 V10 L6 15.5 M11.5 5 V15 M8.5 8.5 V15 H15.5 V8.5" fill="none" stroke="#ffffff" stroke-width="2.6" stroke-linecap="square" opacity="0.8"/><path d="M0 5 H5 M2.6 0 V14.5 L1.2 15.5 M0 11.5 L5 8.5 M7 1 H15.5 V5 H7 M7 1 V10 L6 15.5 M11.5 5 V15 M8.5 8.5 V15 H15.5 V8.5" fill="none" stroke="#a9a9a9" stroke-width="1.25"/></svg>
<svg style="left:1239px;top:622px" width="16" height="16" viewBox="0 0 16 16"><path d="M8 0 L0 6.5 M8 0 L16 6.5 M4 7.2 H12 M3 10.2 H13 M8 7.2 V15 M5 11.5 L6 13.5 M11 11.5 L10 13.5 M0.5 15.2 H15.5" fill="none" stroke="#ffffff" stroke-width="2.6" stroke-linecap="square" opacity="0.8"/><path d="M8 0 L0 6.5 M8 0 L16 6.5 M4 7.2 H12 M3 10.2 H13 M8 7.2 V15 M5 11.5 L6 13.5 M11 11.5 L10 13.5 M0.5 15.2 H15.5" fill="none" stroke="#a9a9a9" stroke-width="1.25"/></svg>
<svg style="left:1256.8px;top:622px" width="16" height="16" viewBox="0 0 16 16"><path d="M0 5 H5 M2.6 0 V14.5 L1.2 15.5 M0 11.5 L5 8.5 M7 3.8 H16 M11.5 0 V7.5 M8 8.2 H14 L8 15.5 M9.5 10.5 L15.5 15.5" fill="none" stroke="#ffffff" stroke-width="2.6" stroke-linecap="square" opacity="0.8"/><path d="M0 5 H5 M2.6 0 V14.5 L1.2 15.5 M0 11.5 L5 8.5 M7 3.8 H16 M11.5 0 V7.5 M8 8.2 H14 L8 15.5 M9.5 10.5 L15.5 15.5" fill="none" stroke="#a9a9a9" stroke-width="1.25"/></svg>
<svg style="left:1274.9px;top:622px" width="16" height="16" viewBox="0 0 16 16"><path d="M0 5 H16 M8 0 V16 M7.2 6 L0.5 13 M8.8 6 L16 12 M11 1.2 L13 3" fill="none" stroke="#ffffff" stroke-width="2.6" stroke-linecap="square" opacity="0.8"/><path d="M0 5 H16 M8 0 V16 M7.2 6 L0.5 13 M8.8 6 L16 12 M11 1.2 L13 3" fill="none" stroke="#a9a9a9" stroke-width="1.25"/></svg>
<svg style="left:1293px;top:622px" width="16" height="16" viewBox="0 0 16 16"><path d="M2 0.3 L3.2 2.2 M0 4.2 H5 L1 10 M3.2 7 V16 M3.6 9 L5.2 11 M7 7 H16 M11.5 1 V15 M6 15.2 H16" fill="none" stroke="#ffffff" stroke-width="2.6" stroke-linecap="square" opacity="0.8"/><path d="M2 0.3 L3.2 2.2 M0 4.2 H5 L1 10 M3.2 7 V16 M3.6 9 L5.2 11 M7 7 H16 M11.5 1 V15 M6 15.2 H16" fill="none" stroke="#a9a9a9" stroke-width="1.25"/></svg>
<svg style="left:1311.6px;top:622px" width="16" height="16" viewBox="0 0 16 16"><path d="M15.5 1 H1 V15.2 H15.5 M4.5 4 L13 13 M12.5 4 L4 13" fill="none" stroke="#ffffff" stroke-width="2.6" stroke-linecap="square" opacity="0.8"/><path d="M15.5 1 H1 V15.2 H15.5 M4.5 4 L13 13 M12.5 4 L4 13" fill="none" stroke="#a9a9a9" stroke-width="1.25"/></svg>
</body></html>
